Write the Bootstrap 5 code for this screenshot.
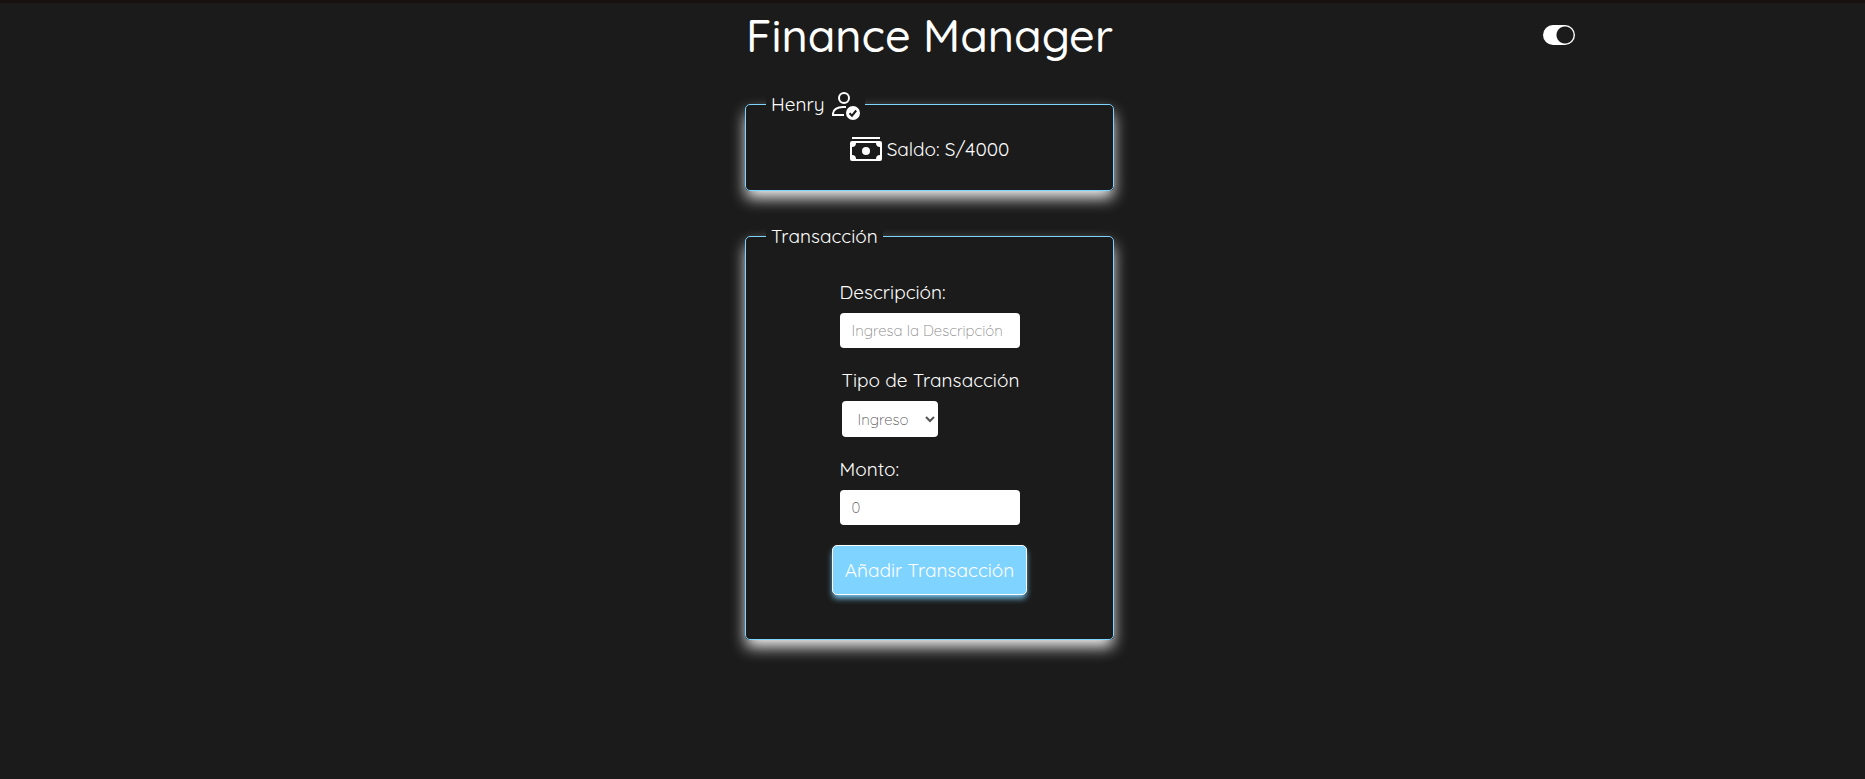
<!DOCTYPE html>
<html lang="es">
<head>
<meta charset="utf-8">
<meta name="viewport" content="width=device-width, initial-scale=1">
<title>Finance Manager</title>
<link href="https://cdn.jsdelivr.net/npm/bootstrap@5.3.0/dist/css/bootstrap.min.css" rel="stylesheet">
<style>
  :root { --page: #1b1b1b; --accent: #7fd3ff; }
  body {
    background: var(--page);
    border-top: 3px solid #17120f;
    color: #fff;
    font-family: Quicksand, Lato, sans-serif;
    font-size: 19px;
    font-weight: 400;
    line-height: 24px;
    padding-right: 6px;
  }
  .page-header { padding-top: 3px; margin-bottom: 24px; }
  .page-title { font-size: 45px; line-height: 58px; font-weight: 500; }
  .theme-cell { padding-left: 20px; }
  .theme-switch {
    appearance: none;
    width: 32px; height: 20px;
    border-radius: 10px;
    background: radial-gradient(circle at 22px 10px, var(--page) 8px, #fff 9px);
  }
  .panels { gap: 33px; }
  .panel-box {
    width: 369px;
    border: 1px solid var(--accent);
    border-radius: 5px;
    background: var(--page);
    box-shadow: 0 8px 15px -1px #f4f4f4;
  }
  .panel-box > legend {
    float: none; width: auto;
    margin: 0 0 0 20px;
    padding: 0 5px;
    font-size: 19px; line-height: 24px;
    background: var(--page);
  }
  .owner-legend { gap: 3px; }
  .balance-row { gap: 5px; padding: 13px 0 25px; line-height: 22px; }
  .transaction-form { gap: 20px; padding: 32px 0 44px; }
  .transaction-form label { margin-bottom: 9px; }
  .field-input, .type-select {
    border: 0; border-radius: 4px;
    padding: 0 12px;
    background: #fff; color: #555;
    font-size: 15px; font-weight: 300;
  }
  .field-input { width: 180px; height: 35px; }
  .field-input::placeholder { color: #888; }
  .type-group { width: 176px; }
  .type-select { width: 96px; height: 36px; }
  .add-btn {
    width: 195px; height: 50px;
    padding: 0;
    border: 1px solid #fff; border-radius: 5px;
    background: var(--accent); color: #fff;
    box-shadow: 0 4px 6px -1px var(--accent);
  }
</style>
</head>
<body class="min-vh-100">
<header class="page-header row g-0 align-items-center">
  <h1 class="page-title col-4 offset-4 text-center text-nowrap my-0">Finance Manager</h1>
  <div class="theme-cell col-4 d-flex justify-content-center">
    <input type="checkbox" role="switch" class="theme-switch" checked aria-label="Modo oscuro">
  </div>
</header>
<main class="panels d-flex flex-column align-items-center">
  <fieldset class="panel-box">
    <legend class="owner-legend d-flex align-items-center">Henry
      <svg width="32" height="32" viewBox="0 0 32 32" fill="none" stroke="#fff" stroke-width="2" aria-hidden="true">
        <circle cx="16" cy="10" r="5"/>
        <path d="M18 19h-3c-6 0-10 3-10 6.500V27h11"/>
        <circle cx="25" cy="25" r="7" fill="#fff" stroke="none"/>
        <path d="M21.500 25.200l2.500 2.500 4.200-5.200" stroke="#1b1b1b"/>
      </svg>
    </legend>
    <div class="balance-row d-flex justify-content-center align-items-center">
      <svg width="32" height="32" viewBox="0 0 32 32" fill="#fff" aria-hidden="true">
        <rect x="2" y="4" width="28" height="2"/>
        <path fill-rule="evenodd" d="M2 8h28a2 2 0 0 1 2 2v16a2 2 0 0 1-2 2H2a2 2 0 0 1-2-2V10a2 2 0 0 1 2-2zM6 10a4 4 0 0 1-4 4v8a4 4 0 0 1 4 4h20a4 4 0 0 1 4-4v-8a4 4 0 0 1-4-4z"/>
        <circle cx="16" cy="18" r="4"/>
      </svg>
      <span>Saldo: S/4000</span>
    </div>
  </fieldset>
  <fieldset class="panel-box">
    <legend>Transacción</legend>
    <form class="transaction-form d-flex flex-column align-items-center">
      <div>
        <label for="descripcion" class="d-block">Descripción:</label>
        <input type="text" id="descripcion" class="field-input d-block" placeholder="Ingresa la Descripción">
      </div>
      <div class="type-group">
        <label for="tipo" class="d-block text-nowrap">Tipo de Transacción</label>
        <select id="tipo" class="type-select d-block"><option>Ingreso</option><option>Gasto</option></select>
      </div>
      <div>
        <label for="monto" class="d-block">Monto:</label>
        <input type="number" id="monto" class="field-input d-block" value="0">
      </div>
      <button type="button" class="add-btn">Añadir Transacción</button>
    </form>
  </fieldset>
</main>
<script src="https://cdn.jsdelivr.net/npm/bootstrap@5.3.0/dist/js/bootstrap.bundle.min.js"></script>
</body>
</html>
